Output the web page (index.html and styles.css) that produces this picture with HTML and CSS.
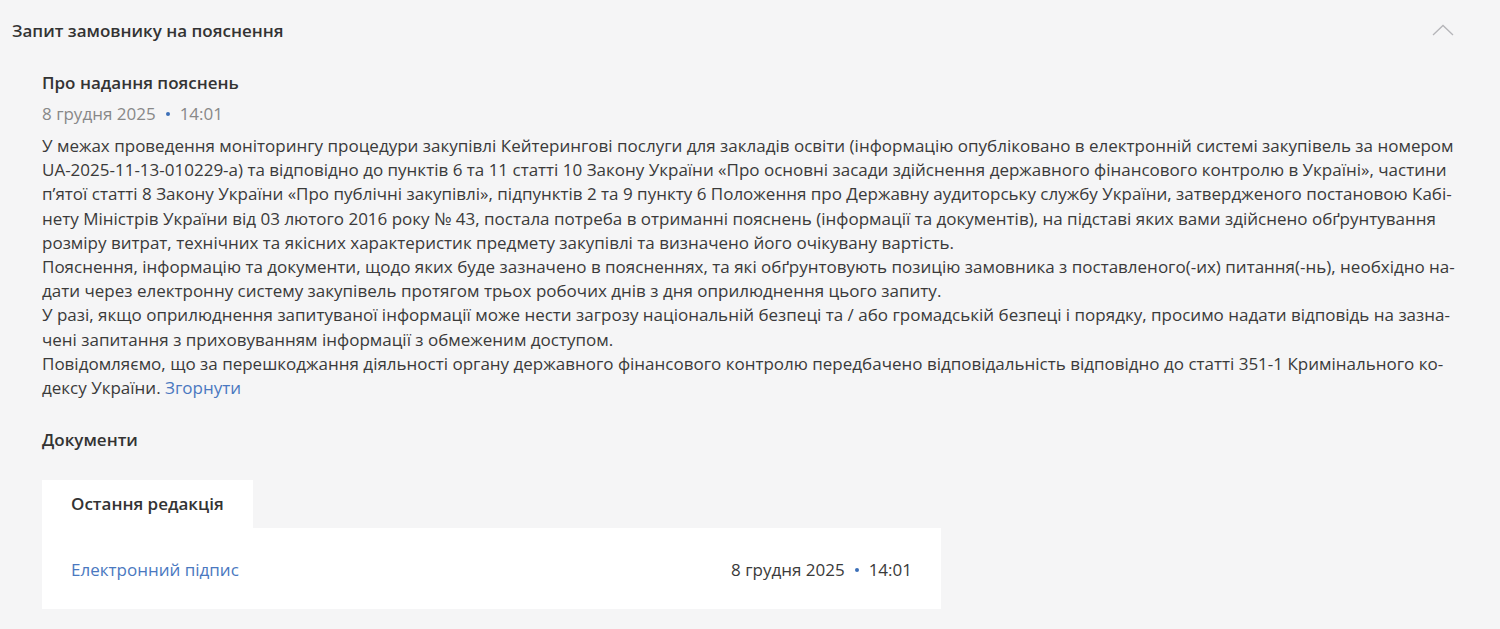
FILE: index.html
```html
<!DOCTYPE html>
<html lang="uk">
<head>
    <meta charset="UTF-8">
    <title>Запит замовнику на пояснення</title>
    <link rel="stylesheet" href="styles.css">
</head>
<body>
    <div class="request">
        <div class="request-head">
            <h2 class="request-title">Запит замовнику на пояснення</h2>
            <button class="collapse-button" type="button" aria-label="Згорнути">
                <svg width="22" height="12" viewBox="0 0 22 12"><path d="M1 11 L11 1.5 L21 11" fill="none" stroke="#b5b5b9" stroke-width="1.3"/></svg>
            </button>
        </div>

        <div class="request-body">
            <h3 class="subject">Про надання пояснень</h3>
            <div class="date">8 грудня 2025 <span class="dot"></span> 14:01</div>

            <div class="description">
                <p>У межах проведення моніторингу процедури закупівлі Кейтерингові послуги для закладів освіти (інформацію опубліковано в електронній системі закупівель за номером <span class="nowrap">UA-2025-11-13-010229-a)</span> та відповідно до пунктів 6 та 11 статті 10 Закону України «Про основні засади здійснення державного фінансового контролю в Україні», частини п’ятої статті 8 Закону України «Про публічні закупівлі», підпунктів 2 та 9 пункту 6 Положення про Державну аудиторську службу України, затвердженого постановою Кабі&shy;нету Міністрів України від 03 лютого 2016 року № 43, постала потреба в отриманні пояснень (інформації та документів), на підставі яких вами здійснено обґрунтування розміру витрат, технічних та якісних характеристик предмету закупівлі та визначено його очікувану вартість.</p>
                <p>Пояснення, інформацію та документи, щодо яких буде зазначено в поясненнях, та які обґрунтовують позицію замовника з поставленого(-их) питання(-нь), необхідно на&shy;дати через електронну систему закупівель протягом трьох робочих днів з дня оприлюднення цього запиту.</p>
                <p>У разі, якщо оприлюднення запитуваної інформації може нести загрозу національній безпеці та / або громадській безпеці і порядку, просимо надати відповідь на зазна&shy;чені запитання з приховуванням інформації з обмеженим доступом.</p>
                <p>Повідомляємо, що за перешкоджання діяльності органу державного фінансового контролю передбачено відповідальність відповідно до статті 351-1 Кримінального ко&shy;дексу України. <a href="#" class="link">Згорнути</a></p>
            </div>

            <h3 class="docs-title">Документи</h3>

            <div class="docs">
                <div class="tabs">
                    <div class="tab active">Остання редакція</div>
                </div>
                <div class="doc-panel">
                    <div class="doc-row">
                        <a href="#" class="link">Електронний підпис</a>
                        <span class="doc-date">8 грудня 2025 <span class="dot"></span> 14:01</span>
                    </div>
                </div>
            </div>
        </div>
    </div>
</body>
</html>
```

FILE: styles.css
```css
body, html {
    margin: 0;
    padding: 0;
    background-color: #f5f5f6;
    font-family: 'Open Sans', 'Noto Sans', sans-serif;
    font-size: 17px;
    color: #333;
}

.request {
    padding: 14px 12px 20px 12px;
}

.request-head {
    display: flex;
    justify-content: space-between;
    align-items: center;
    height: 32px;
}

.request-title {
    margin: 0;
    font-size: 17px;
    font-weight: 600;
    color: #333;
}

.collapse-button {
    border: none;
    background: none;
    padding: 0;
    margin-right: 34px;
    cursor: pointer;
    display: flex;
}

.request-body {
    padding: 0 30px;
}

.subject {
    margin: 25px 0 0 0;
    font-size: 17px;
    font-weight: 600;
    line-height: 24px;
}

.date {
    margin-top: 7px;
    color: #888;
    line-height: 24px;
    display: flex;
    align-items: center;
}

.dot {
    display: inline-block;
    width: 4px;
    height: 4px;
    border-radius: 50%;
    background-color: #3c6fb8;
    margin: 0 10px;
}

.description {
    margin-top: 8px;
    line-height: 24.2px;
    color: #3a3a3a;
}

.description p {
    margin: 0;
}

.nowrap {
    white-space: nowrap;
}

.link {
    color: #4a78c0;
    text-decoration: none;
}

.docs-title {
    margin: 28px 0 0 0;
    font-size: 17px;
    font-weight: 600;
    line-height: 24px;
}

.docs {
    margin-top: 28px;
    width: 899px;
}

.tabs {
    display: flex;
}

.tab {
    background-color: #fff;
    padding: 12px 29px;
    font-weight: 600;
    line-height: 24px;
}

.doc-panel {
    background-color: #fff;
    padding: 30px 29px 27px 29px;
}

.doc-row {
    display: flex;
    justify-content: space-between;
    align-items: center;
    line-height: 24px;
}

.doc-date {
    display: flex;
    align-items: center;
    color: #3a3a3a;
}
```
